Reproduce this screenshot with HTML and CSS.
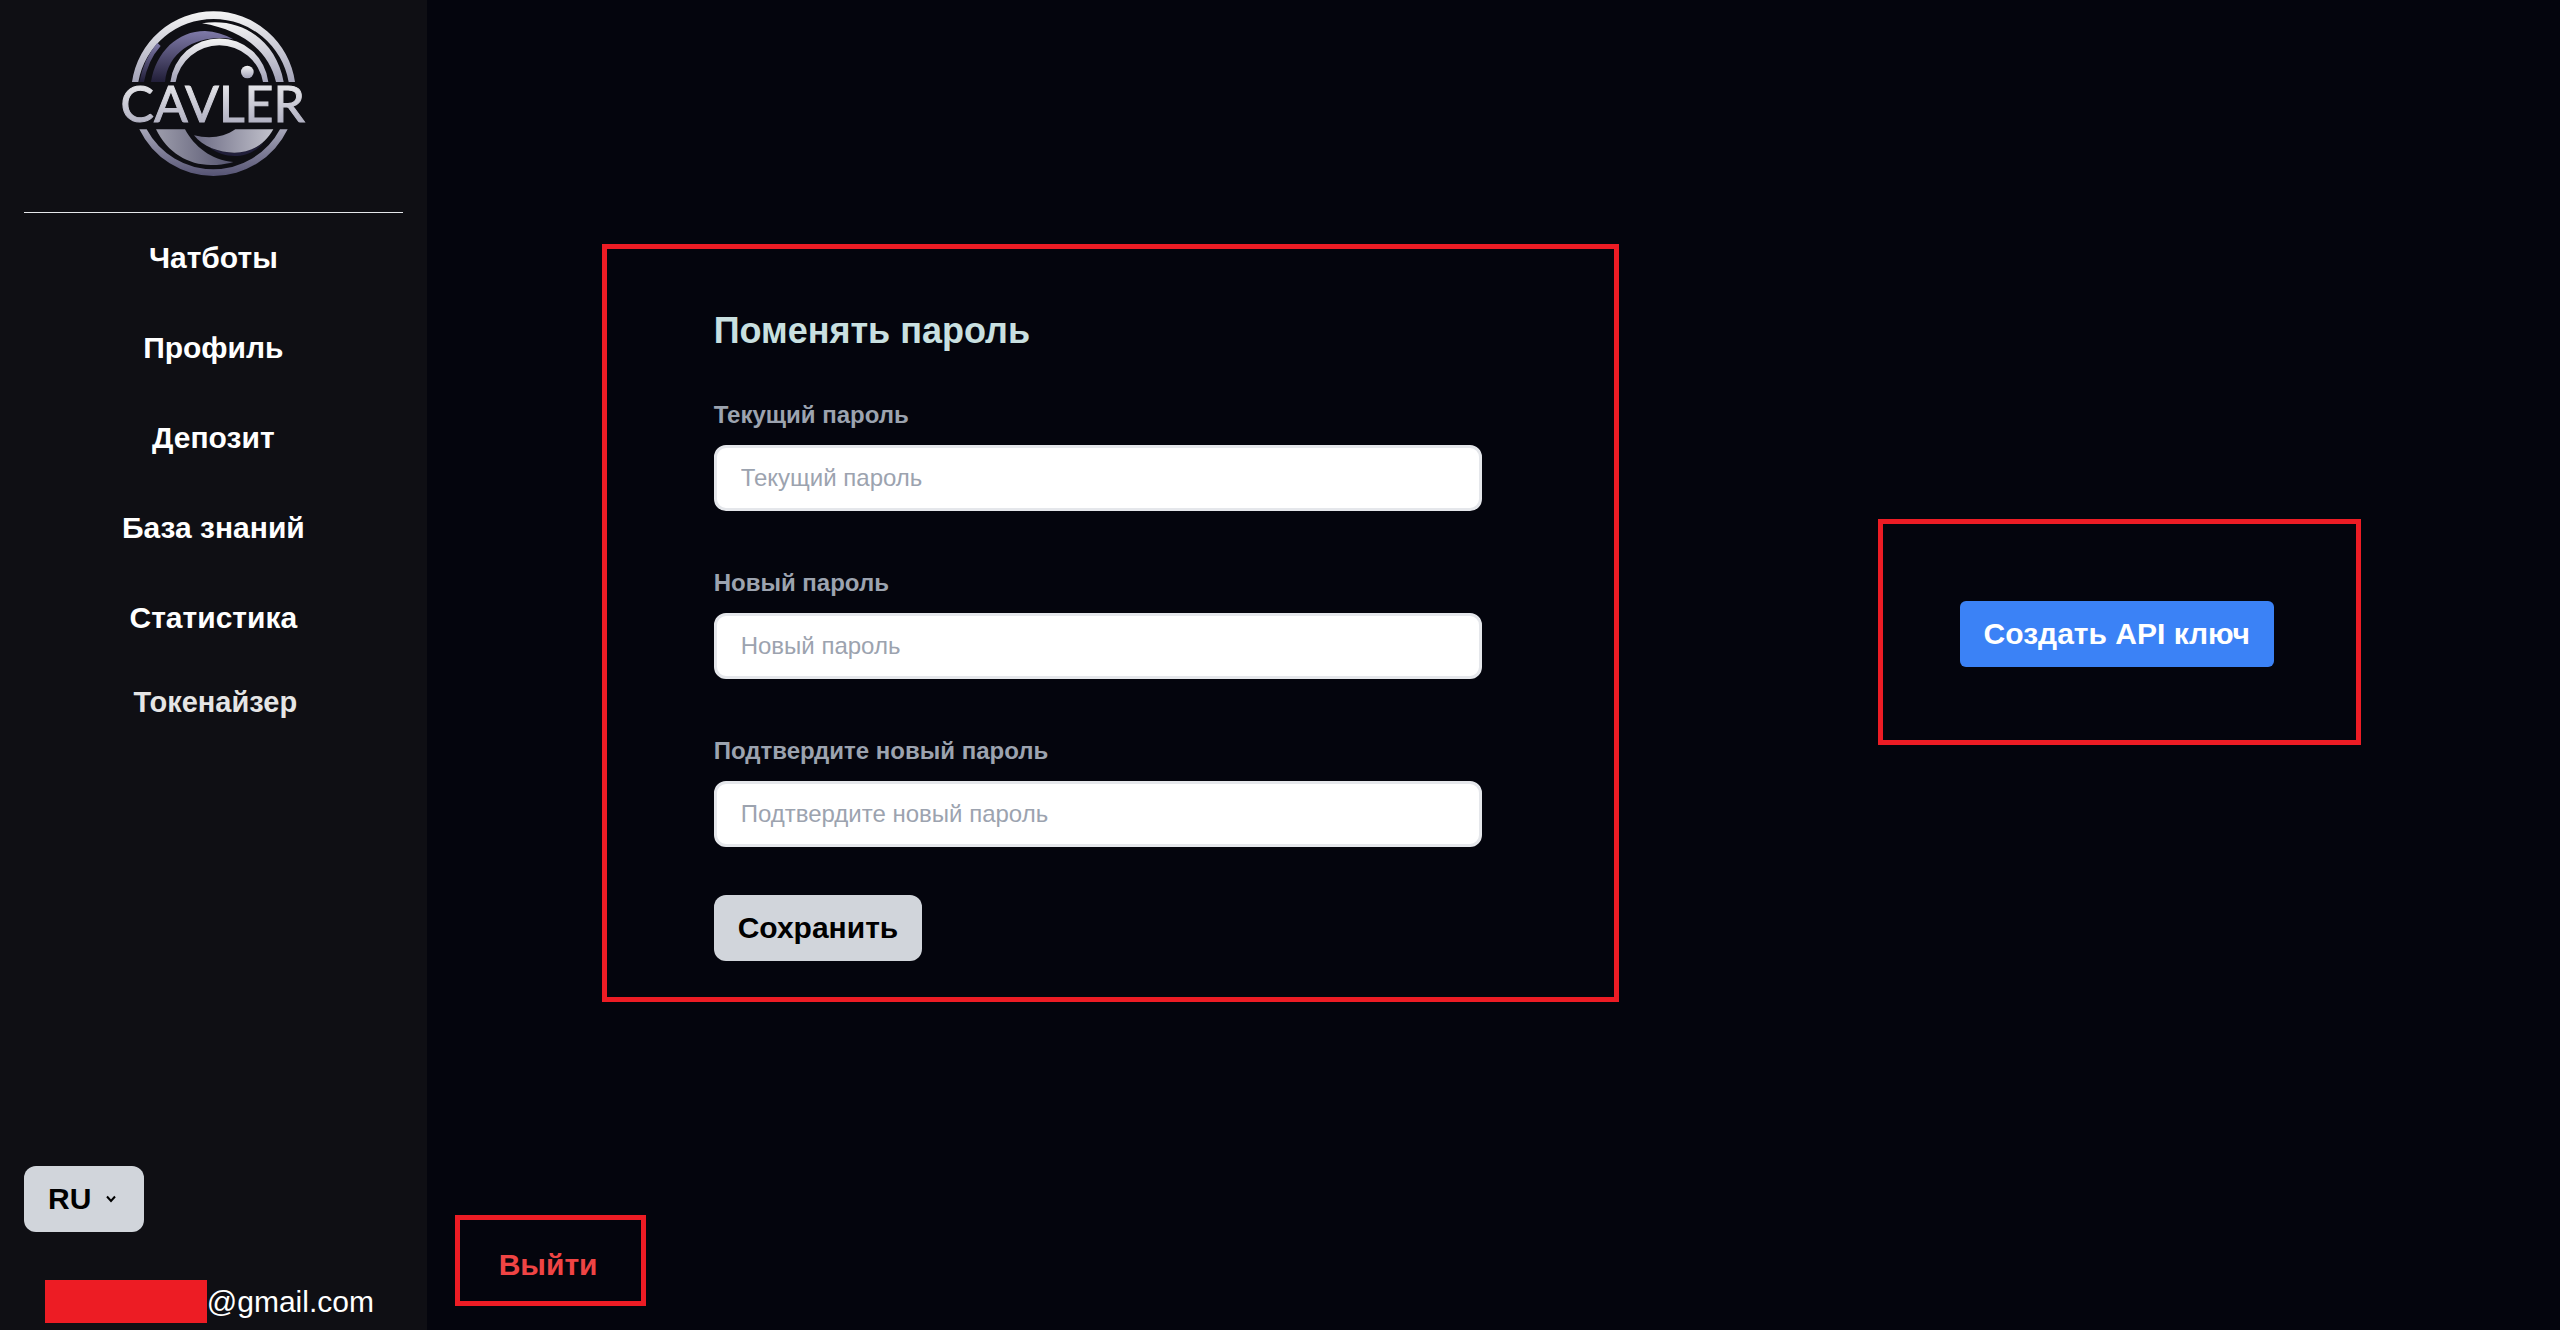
FILE: index.html
```
<!DOCTYPE html>
<html lang="ru">
<head>
    <meta charset="UTF-8">
    <meta name="viewport" content="width=device-width, initial-scale=1.0">
    <title>Cavler - Профиль</title>
    <link rel="stylesheet" href="styles.css">
</head>
<body>
    <div class="layout">
        <aside class="sidebar">
            <a class="logo" href="#" aria-label="Cavler">
                <svg viewBox="-4 0 690 600" width="230" height="200">
                    <defs>
                        <linearGradient id="silver" x1="0" y1="0" x2="0" y2="1">
                            <stop offset="0" stop-color="#f4f4f4"/>
                            <stop offset="1" stop-color="#a3a3b8"/>
                        </linearGradient>
                        <linearGradient id="violet" x1="0" y1="0" x2="0" y2="1">
                            <stop offset="0" stop-color="#7f7aa8"/>
                            <stop offset="1" stop-color="#211e38"/>
                        </linearGradient>
                        <linearGradient id="ring" x1="0" y1="0" x2="0" y2="1">
                            <stop offset="0" stop-color="#a6a6b8"/>
                            <stop offset="1" stop-color="#565474"/>
                        </linearGradient>
                        <linearGradient id="waveLeft" x1="0" y1="0" x2="1" y2="0">
                            <stop offset="0" stop-color="#9c9cab"/>
                            <stop offset="1" stop-color="#55546e"/>
                        </linearGradient>
                        <linearGradient id="waveRight" x1="0" y1="0" x2="1" y2="0">
                            <stop offset="0" stop-color="#6c6b84"/>
                            <stop offset="1" stop-color="#c2c2cc"/>
                        </linearGradient>
                    </defs>
                    <path fill="url(#silver)" d="M98 246A247 247 0 0 1 587 246H568A229 229 0 0 0 117 246Z"/>
                    <path fill="url(#violet)" d="M120 246Q132 178 174 128L184 138Q146 180 134 246Z"/>
                    <path fill="url(#violet)" d="M155 246C170 155 235 93 317 93Q362 95 402 118C315 100 207 140 197 246Z"/>
                    <path fill="url(#silver)" d="M308 70C430 50 532 125 553 246H530C510 155 430 90 308 70Z"/>
                    <path fill="url(#silver)" d="M213 246A148 148 0 0 1 507 246H491A133 133 0 0 0 229 246Z"/>
                    <circle fill="url(#silver)" cx="444" cy="216" r="19"/>
                    <text class="logo-text" x="340" y="367" text-anchor="middle" fill="url(#silver)" stroke="url(#silver)">CAVLER</text>
                    <path fill="url(#ring)" d="M120 388H142A227 227 0 0 0 542 388H565A247 247 0 0 1 120 388Z"/>
                    <path fill="url(#waveLeft)" d="M170 388H257C285 440 335 480 402 486C375 494 355 495 340 495C270 497 205 460 170 388Z"/>
                    <path fill="#211f3a" d="M330 442C380 466 450 462 492 428C450 480 375 478 330 442Z"/>
                    <path fill="url(#waveRight)" d="M284 406C330 418 375 412 408 388H522C495 435 455 458 405 458C360 458 310 440 284 406Z"/>
                </svg>
            </a>
            <nav class="nav">
                <a href="#">Чатботы</a>
                <a href="#">Профиль</a>
                <a href="#">Депозит</a>
                <a href="#">База знаний</a>
                <a href="#">Статистика</a>
                <button type="button" class="nav-button">Токенайзер</button>
            </nav>
            <div class="sidebar-footer">
                <button type="button" class="btn lang">
                    RU
                    <svg viewBox="0 0 10 8" width="10" height="8"><path d="M1 1.5L5 6L9 1.5" fill="none" stroke="#000" stroke-width="2"/></svg>
                </button>
                <div class="account"><span class="redacted"></span>@gmail.com</div>
            </div>
        </aside>

        <main class="main">
            <div class="panels">
                <form class="frame password-form">
                    <h1>Поменять пароль</h1>
                    <div class="form-group">
                        <label for="currentPassword">Текущий пароль</label>
                        <input type="password" id="currentPassword" placeholder="Текущий пароль">
                    </div>
                    <div class="form-group">
                        <label for="newPassword">Новый пароль</label>
                        <input type="password" id="newPassword" placeholder="Новый пароль">
                    </div>
                    <div class="form-group">
                        <label for="confirmPassword">Подтвердите новый пароль</label>
                        <input type="password" id="confirmPassword" placeholder="Подтвердите новый пароль">
                    </div>
                    <button type="submit" class="btn save">Сохранить</button>
                </form>
                <section class="frame api">
                    <button type="button" class="btn btn-primary">Создать API ключ</button>
                </section>
            </div>
            <div class="frame logout">
                <button type="button" class="logout-button">Выйти</button>
            </div>
        </main>
    </div>
</body>
</html>
```

FILE: styles.css
```
* {
    box-sizing: border-box;
}
body {
    margin: 0;
    font-family: "Liberation Sans", Arial, sans-serif;
    font-size: 30px;
    line-height: 42px;
    color: #fff;
    background-color: #04050d;
}
button,
input {
    font: inherit;
}
button {
    border: none;
    cursor: pointer;
}
.layout {
    display: grid;
    grid-template-columns: 1fr 5fr;
    min-height: 100vh;
}
.sidebar {
    display: flex;
    flex-direction: column;
    padding: 0 24px;
    background-color: #0f0f14;
}
.logo {
    display: flex;
    justify-content: center;
    padding-bottom: 12px;
    border-bottom: 1px solid #e5e7eb;
}
.logo-text {
    font-family: Lato, sans-serif;
    font-size: 150px;
    stroke-width: 3px;
}
.nav {
    display: flex;
    flex-direction: column;
    align-items: center;
    padding-top: 24px;
    gap: 48px;
    font-weight: bold;
}
.nav a {
    color: #fff;
    text-decoration: none;
}
.nav-button {
    margin-top: -6px;
    padding: 0 0 0 4px;
    font-size: 29px;
    font-weight: bold;
    color: #e5e5e5;
    background: none;
}
.sidebar-footer {
    margin-top: auto;
    padding-bottom: 7px;
}
.btn {
    padding: 12px 24px;
    border-radius: 12px;
    font-weight: bold;
    color: #000;
    background-color: #d1d5db;
}
.lang {
    display: flex;
    align-items: center;
    gap: 15px;
    padding-right: 28px;
}
.account {
    display: flex;
    justify-content: center;
    align-items: center;
    margin-top: 48px;
    padding-right: 8px;
}
.redacted {
    width: 162px;
    height: 43px;
    background-color: #ed1c24;
}
.main {
    display: flex;
    flex-direction: column;
    justify-content: space-between;
    padding: 244px 199px 24px 28px;
}
.frame {
    border: 5px solid #ed1c24;
}
.panels {
    display: flex;
    justify-content: space-between;
    align-items: center;
    gap: 259px;
    padding-left: 147px;
}
.password-form {
    flex: 1;
    padding: 61px 132px 36px 107px;
}
h1 {
    margin: 0 0 45px;
    font-size: 36px;
    line-height: 42px;
    color: #c9e0e0;
}
.form-group + .form-group {
    margin-top: 54px;
}
label {
    display: block;
    margin-bottom: 12px;
    font-size: 24px;
    line-height: 36px;
    font-weight: bold;
    color: #9ca3af;
}
input {
    display: block;
    width: 100%;
    height: 66px;
    padding: 0 24px;
    border: 3px solid #e5e7eb;
    border-radius: 12px;
    font-size: 24px;
    background-color: #fff;
}
input::placeholder {
    color: #9ca3af;
}
.save {
    display: block;
    margin-top: 48px;
}
.api {
    margin-top: 18px;
    padding: 77px 82px 73px 77px;
}
.btn-primary {
    display: block;
    border-radius: 6px;
    color: #fff;
    background-color: #3b82f6;
    white-space: nowrap;
}
.logout {
    align-self: flex-start;
    padding: 24px 43px 15px 39px;
}
.logout-button {
    display: block;
    padding: 0;
    font-weight: bold;
    color: #ef4444;
    background: none;
}
```
